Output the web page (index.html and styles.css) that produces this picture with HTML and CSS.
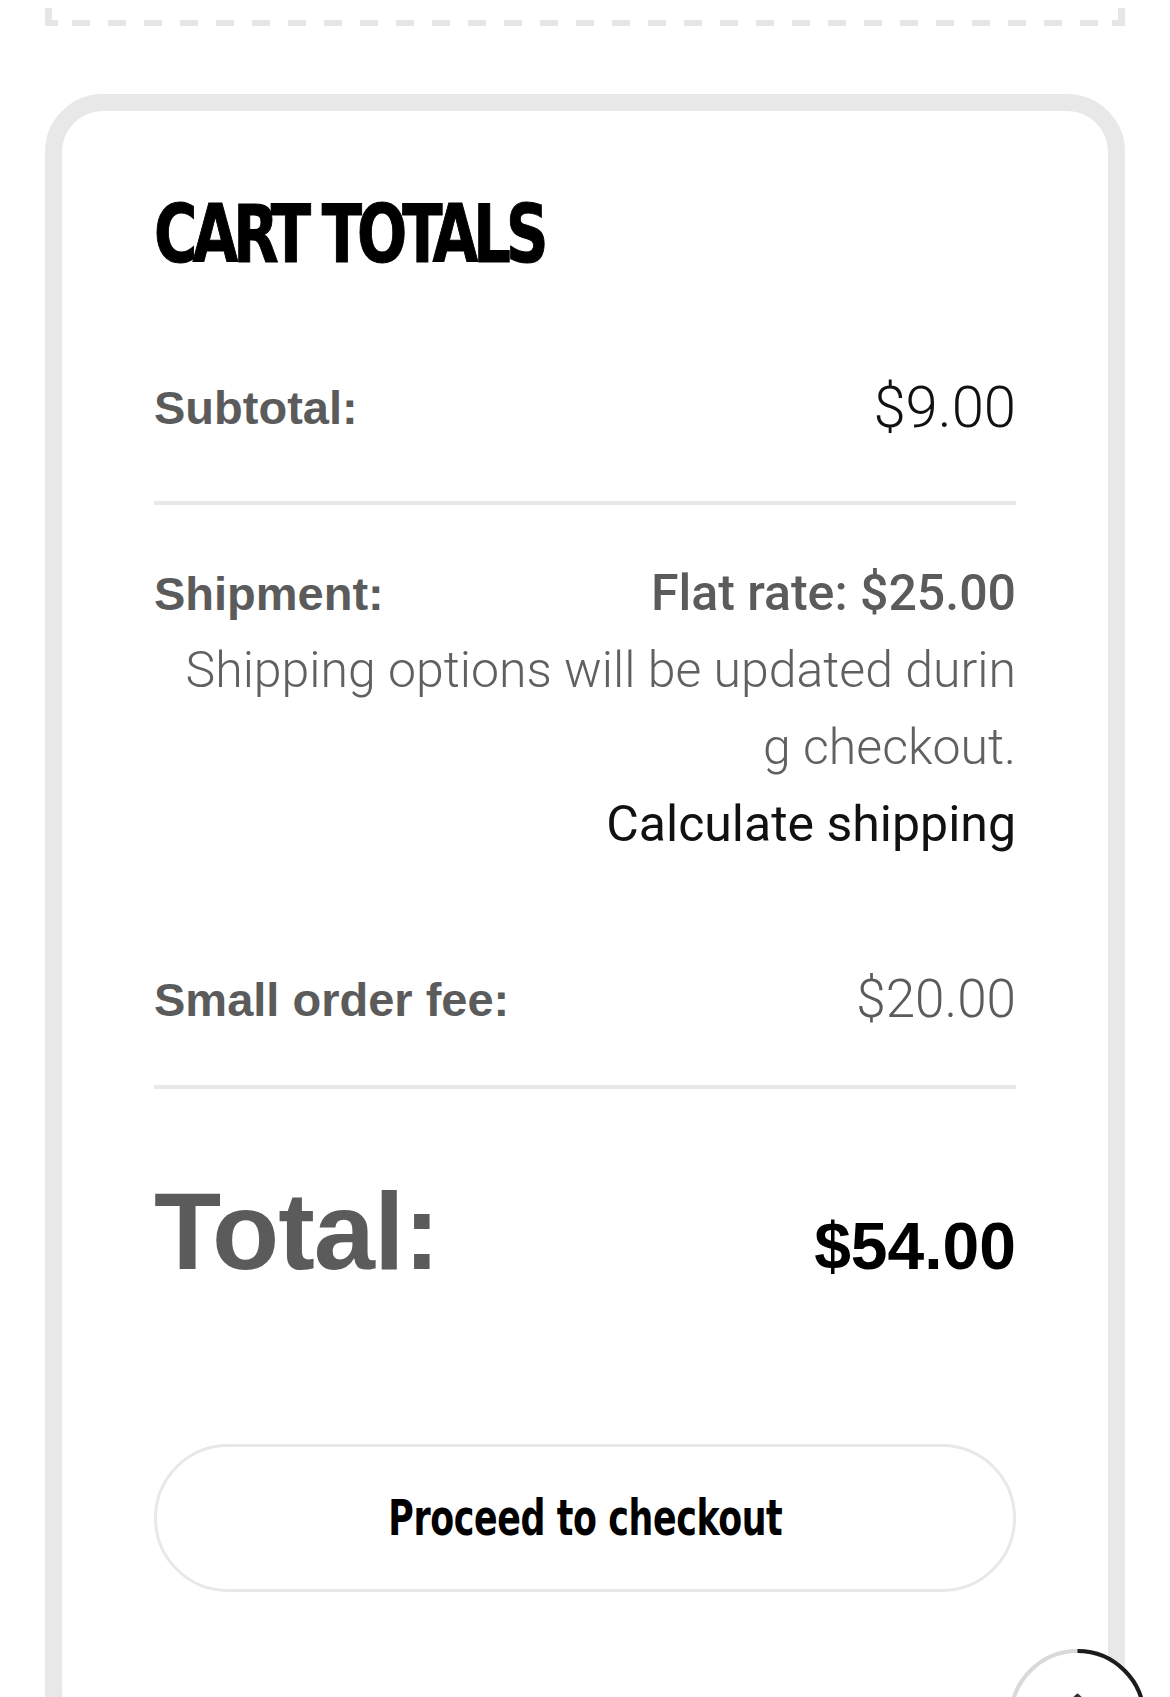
FILE: index.html
```html
<!DOCTYPE html>
<html lang="en">

<head>
    <meta charset="UTF-8">
    <meta name="viewport" content="width=device-width, initial-scale=1.0">
    <title>Cart Totals</title>
    <link rel="stylesheet" href="styles.css">
</head>

<body>
    <!-- низ блока с купоном -->
    <div class="coupon-box"></div>

    <section class="cart-totals">
        <h2 class="cart-totals-title">CART TOTALS</h2>

        <div class="totals-row with-line">
            <span class="totals-label">Subtotal:</span>
            <span class="totals-value subtotal-value">$9.00</span>
        </div>

        <div class="totals-row shipping-row">
            <span class="totals-label">Shipment:</span>
            <span class="shipping-rate">Flat rate: $25.00</span>
            <p class="shipping-note">Shipping options will be updated during checkout.</p>
            <a class="shipping-calc" href="#">Calculate shipping</a>
        </div>

        <div class="totals-row with-line fee-row">
            <span class="totals-label">Small order fee:</span>
            <span class="totals-value fee-value">$20.00</span>
        </div>

        <div class="totals-row total-row">
            <span class="total-label">Total:</span>
            <strong class="total-value">$54.00</strong>
        </div>

        <a class="checkout-button" href="#"><span>Proceed to checkout</span></a>
    </section>

    <button class="scroll-top" aria-label="Back to top">
        <svg viewBox="0 0 137 137" width="137" height="137">
            <circle cx="68.5" cy="68.5" r="66.5" fill="#fff" stroke="#d9d9d9" stroke-width="4" />
            <circle cx="68.5" cy="68.5" r="66.5" fill="none" stroke="#1c1c1c" stroke-width="4"
                stroke-dasharray="146 420" transform="rotate(-90 68.5 68.5)" />
            <path d="M68.5 46 L68.5 92 M56 58 L68.5 46 L81 58" fill="none" stroke="#333" stroke-width="3"
                stroke-linecap="round" stroke-linejoin="round" />
        </svg>
    </button>
</body>

</html>
```

FILE: styles.css
```css
body {
    margin: 0;
    padding: 0 45px;
    background-color: #fff;
    font-family: 'Roboto', 'Liberation Sans', sans-serif;
    color: #111;
}

/* пунктир с длинными штрихами, как в макете */
.coupon-box {
    height: 26px;
    background:
        linear-gradient(#e6e6e6, #e6e6e6) left bottom / 7px 18px no-repeat,
        linear-gradient(#e6e6e6, #e6e6e6) right bottom / 7px 18px no-repeat,
        linear-gradient(#e6e6e6, #e6e6e6) left bottom / 13px 6px no-repeat,
        linear-gradient(#e6e6e6, #e6e6e6) right bottom / 13px 6px no-repeat,
        repeating-linear-gradient(90deg, #e6e6e6 0 18px, transparent 18px 36px) 27px bottom / calc(100% - 54px) 6px no-repeat;
}

.cart-totals {
    margin-top: 68px;
    border: 17px solid #e8e8e8;
    border-radius: 58px;
    padding: 84px 92px 140px;
}

/* узкого жирного шрифта нет, поэтому сжимаем по ширине */
.cart-totals-title {
    margin: 0;
    font-family: 'Liberation Sans Narrow', 'DejaVu Sans Condensed', sans-serif;
    font-stretch: condensed;
    font-weight: 700;
    font-size: 80px;
    line-height: 80px;
    letter-spacing: -6px;
    -webkit-text-stroke: 1px #000;
    color: #000;
    transform: scaleX(0.82);
    transform-origin: left center;
}

.totals-row {
    display: flex;
    justify-content: space-between;
    align-items: flex-start;
    line-height: 77px;
}

.with-line {
    padding: 94px 0 55px;
    border-bottom: 4px solid #e8e8e8;
}

.fee-row {
    padding: 98px 0 47px;
}

.totals-label {
    font-family: 'Liberation Sans', sans-serif;
    font-weight: 700;
    font-size: 47px;
    color: #5b5b5b;
}

.totals-value {
    font-weight: 300;
}

.subtotal-value {
    font-size: 58px;
    color: #111;
}

.fee-value {
    font-size: 53px;
    color: #5b5b5b;
}

/* строка доставки: метка и тариф в первой строке, остальное на всю ширину */
.shipping-row {
    display: grid;
    grid-template-columns: auto 1fr;
    padding-top: 50px;
    font-size: 50px;
    text-align: right;
}

.shipping-rate {
    font-weight: 500;
    color: #5b5b5b;
}

.shipping-note {
    grid-column: 1 / -1;
    justify-self: end;
    max-width: 845px;
    margin: 0;
    font-weight: 300;
    color: #606060;
    word-break: break-all;
}

.shipping-calc {
    grid-column: 1 / -1;
    color: #111;
    text-decoration: none;
}

.total-row {
    align-items: baseline;
    padding-top: 87px;
    line-height: 1;
}

.total-label {
    font-family: 'Liberation Sans', sans-serif;
    font-weight: 700;
    font-size: 110px;
    letter-spacing: -1px;
    color: #5b5b5b;
}

.total-value {
    font-family: 'Liberation Sans', sans-serif;
    font-weight: 700;
    font-size: 66px;
    color: #000;
}

.checkout-button {
    margin-top: 158px;
    height: 142px;
    border: 3px solid #e8e8e8;
    border-radius: 80px;
    display: flex;
    align-items: center;
    justify-content: center;
    font-family: 'Liberation Sans Narrow', 'DejaVu Sans Condensed', sans-serif;
    font-stretch: condensed;
    font-weight: 700;
    font-size: 49px;
    letter-spacing: -0.5px;
    color: #000;
    text-decoration: none;
}

.checkout-button span {
    display: inline-block;
    transform: scaleX(0.79);
}

.scroll-top {
    position: fixed;
    right: 24px;
    bottom: -89px;
    width: 137px;
    height: 137px;
    padding: 0;
    border: none;
    border-radius: 50%;
    background: none;
    cursor: pointer;
}

.scroll-top svg {
    display: block;
}
```
